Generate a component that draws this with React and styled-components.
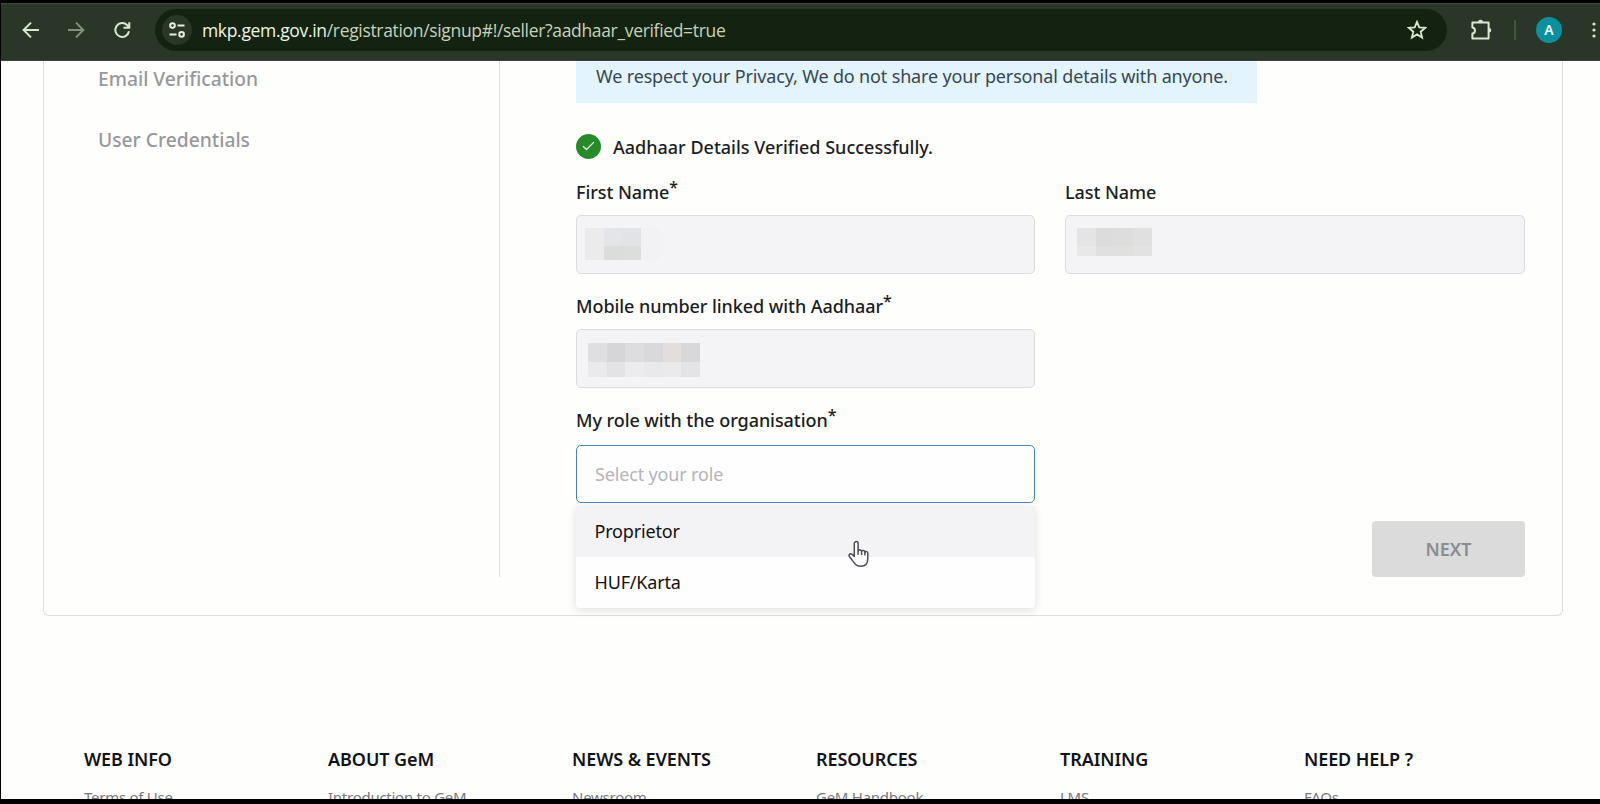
import React from "react";
import styled, { createGlobalStyle } from "styled-components";

const GlobalStyle = createGlobalStyle`
  * {
    box-sizing: border-box;
  }
  body {
    margin: 0;
    background: #000;
    font-family: "Noto Sans", "Open Sans", sans-serif;
  }
`;

const Screen = styled.div`
  width: 1600px;
  height: 804px;
  padding: 3px 0 5px 1px;
  background: #000;
  display: flex;
  flex-direction: column;
  overflow: hidden;
`;

const Toolbar = styled.header`
  height: 58px;
  flex: none;
  display: flex;
  align-items: center;
  padding-left: 20px;
  padding-bottom: 4px;
  background: #2a3728;
  border-top: 1px solid #3c4a3a;
  border-bottom: 1px solid #3c4439;
  color: #d9e8cf;
  overflow: hidden;
`;

const NavButton = styled.span`
  width: 20px;
  height: 20px;
  margin-right: ${(props) => props.gap || "25px"};
  flex: none;
  opacity: ${(props) => (props.dim ? 0.5 : 1)};
  svg {
    display: block;
  }
`;

const AddressBar = styled.div`
  width: 1292px;
  height: 42px;
  flex: none;
  display: flex;
  align-items: center;
  padding: 0 20px 0 7px;
  border-radius: 21px;
  background: #142211;
`;

const SiteInfo = styled.span`
  width: 30px;
  height: 30px;
  display: flex;
  align-items: center;
  justify-content: center;
  border-radius: 50%;
  background: #2a3728;
`;

const Url = styled.div`
  flex: 1;
  margin-left: 10px;
  font-family: "Open Sans", "Noto Sans", sans-serif;
  font-size: 17.5px;
  line-height: 24px;
  letter-spacing: -0.33px;
  white-space: nowrap;
  color: #c6d3bb;
  b {
    font-weight: 400;
    color: #eef5e6;
  }
`;

const ToolbarEnd = styled.div`
  display: flex;
  align-items: center;
  flex: none;
  margin-left: 23px;
`;

const Separator = styled.span`
  width: 2px;
  height: 20px;
  margin: 0 20px 0 22px;
  background: #44533f;
`;

const Avatar = styled.span`
  width: 26px;
  height: 26px;
  margin-right: 30px;
  border-radius: 50%;
  background: #0b919d;
  color: #e6fbfb;
  font-size: 14px;
  font-weight: 600;
  line-height: 26px;
  text-align: center;
`;

const Page = styled.main`
  flex: 1;
  min-height: 0;
  overflow: hidden;
  background: #fefefd;
`;

const Card = styled.section`
  width: 1520px;
  height: 555px;
  margin-left: 42px;
  display: flex;
  border: 1px solid #dedede;
  border-top: 0;
  border-radius: 0 0 6px 6px;
`;

const Steps = styled.nav`
  width: 456px;
  height: 516px;
  flex: none;
  padding: 2px 0 0 54px;
  border-right: 1px solid #dedfe1;
`;

const Step = styled.div`
  height: 31px;
  margin-bottom: 30px;
  font-size: 19.25px;
  font-weight: 500;
  line-height: 31px;
  color: #97989c;
`;

const Form = styled.form`
  flex: 1;
  padding-left: 76px;
`;

const Notice = styled.p`
  width: 681px;
  height: 42px;
  margin: 0;
  padding-left: 20px;
  font-size: 18px;
  line-height: 31px;
  letter-spacing: -0.16px;
  white-space: nowrap;
  color: #37474f;
  background: #e3f4ff;
`;

const Verified = styled.div`
  display: flex;
  align-items: center;
  gap: 12px;
  height: 26px;
  margin-top: 30px;
  font-size: 18px;
  font-weight: 500;
  line-height: 24px;
  color: #1a1d23;
  b {
    padding-top: 2px;
    font-weight: inherit;
  }
`;

const CheckBadge = styled.span`
  width: 25px;
  height: 25px;
  display: flex;
  align-items: center;
  justify-content: center;
  border-radius: 50%;
  background: #268a2b;
`;

const Fields = styled.div`
  display: grid;
  grid-template-columns: 459px 460px;
  column-gap: 30px;
  margin-top: 19px;
`;

const Field = styled.div`
  position: relative;
  height: ${(props) => props.height || "114px"};
`;

const Label = styled.label`
  display: block;
  height: ${(props) => props.height || "37px"};
  font-size: 18px;
  font-weight: 500;
  letter-spacing: -0.06px;
  line-height: 28px;
  color: #1a1d23;
  sup {
    position: relative;
    top: -6px;
    font-size: 16px;
    line-height: 0;
    vertical-align: baseline;
  }
`;

const Input = styled.div`
  height: ${(props) => (props.active ? "58px" : "59px")};
  display: flex;
  align-items: flex-start;
  padding: ${(props) => props.pad || "0 18px"};
  border: 1px solid ${(props) => (props.active ? "#4a86bb" : "#dcdcde")};
  border-radius: 5px;
  background: ${(props) => (props.active ? "#fefefe" : "#f4f4f7")};
  font-size: 18px;
  letter-spacing: -0.16px;
  line-height: 56px;
  color: #b3b4b6;
`;

const Mosaic = styled.div`
  display: grid;
  grid-template-columns: repeat(${(props) => props.cols}, 18.7px);
  grid-template-rows: ${(props) => props.rows};
`;

const Tile = styled.i`
  background: ${(props) => props.tone};
`;

const Options = styled.ul`
  position: absolute;
  top: 100px;
  left: 0;
  width: 459px;
  margin: 0;
  padding: 0;
  list-style: none;
  background: #fefefe;
  border-radius: 4px;
  box-shadow: 0 2px 10px rgba(0, 0, 0, 0.13);
`;

const Option = styled.li`
  height: 51px;
  padding-left: 18.5px;
  font-size: 18px;
  letter-spacing: -0.18px;
  line-height: 51px;
  color: #101114;
  background: ${(props) => (props.hovered ? "#f3f3f6" : "transparent")};
`;

const Pointer = styled.svg`
  position: absolute;
  top: 133px;
  left: 270px;
`;

const Actions = styled.div`
  display: flex;
  align-items: flex-end;
  justify-content: flex-end;
`;

const NextButton = styled.button`
  width: 153px;
  height: 56px;
  border: 0;
  border-radius: 4px;
  background: #dbdbdb;
  color: #8a8c90;
  font-family: inherit;
  font-size: 18px;
  font-weight: 600;
`;

const Footer = styled.footer`
  display: grid;
  grid-template-columns: repeat(6, 244px);
  padding: 129px 0 0 83px;
`;

const FooterTitle = styled.h4`
  margin: 0 0 12px;
  font-size: 18px;
  font-weight: 600;
  letter-spacing: -0.08px;
  line-height: 28px;
  color: #111318;
`;

const FooterLink = styled.a`
  display: block;
  font-size: 15px;
  letter-spacing: -0.26px;
  line-height: 24px;
  color: #77797d;
`;

const firstName = ["#ebebec", "#e4e5e8", "#e1e3e6", "#f2f2f5", "#ebebec", "#dcdcda", "#dddddc", "#f2f2f5"];
const lastName = ["#e4e4e5", "#dcdcdc", "#dddddd", "#e0e0e1", "#e8e8e9", "#e0e0e0", "#e0e0df", "#e2e2e3"];
const mobile = [
  "#dfdfe0", "#d6d6d9", "#dddddd", "#d9d9dc", "#e1dedb", "#d8d8db",
  "#eaeaec", "#e3e3e6", "#ecebee", "#e9e9ea", "#eaeaec", "#e4e4e4",
];

const footerColumns = [
  ["WEB INFO", "Terms of Use"],
  ["ABOUT GeM", "Introduction to GeM"],
  ["NEWS & EVENTS", "Newsroom"],
  ["RESOURCES", "GeM Handbook"],
  ["TRAINING", "LMS"],
  ["NEED HELP ?", "FAQs"],
];

const Stroke = ({ d, size = 20, width = 2 }) => (
  <svg width={size} height={size} viewBox="0 0 20 20" fill="none" stroke="currentColor" strokeWidth={width}>
    <path d={d} />
  </svg>
);

const Redacted = ({ tones, cols, rows }) => (
  <Mosaic cols={cols} rows={rows}>
    {tones.map((tone, i) => (
      <Tile key={i} tone={tone} />
    ))}
  </Mosaic>
);

const BrowserBar = () => (
  <Toolbar>
    <NavButton>
      <Stroke d="M18 10H3M10 2.6 2.6 10l7.4 7.4" />
    </NavButton>
    <NavButton dim>
      <Stroke d="M2 10h15M10 2.6l7.4 7.4-7.4 7.4" />
    </NavButton>
    <NavButton gap="24px">
      <Stroke d="M18 11.2A6.9 6.9 0 1 1 16.2 5.2L18 7.4M18.3 2.2v5.6h-5.8" />
    </NavButton>
    <AddressBar>
      <SiteInfo>
        <svg width="18" height="18" viewBox="0 0 18 18" fill="none" stroke="#e6f0de" strokeWidth="2">
          <circle cx="4.5" cy="4.6" r="2.3" />
          <path d="M9.5 4.6h7M1.5 13.4h7" />
          <circle cx="13.6" cy="13.4" r="2.3" />
        </svg>
      </SiteInfo>
      <Url>
        <b>mkp.gem.gov.in</b>/registration/signup#!/seller?aadhaar_verified=true
      </Url>
      <Stroke d="M10 1.8l2.3 5.5 6 .5-4.6 3.9 1.4 5.8L10 14.4l-5.1 3.1 1.4-5.8L1.7 7.8l6-.5z" width={1.8} />
    </AddressBar>
    <ToolbarEnd>
      <svg width="22" height="22" viewBox="0 0 22 22" fill="none" stroke="currentColor" strokeWidth="2">
        <path d="M2.4 3.6H18.6v15.8H2.4v-4.800c3.400-.4 3.400-5.800 0-6.200z" strokeLinejoin="round" />
        <path d="M8 3.200a2.500 2.500 0 0 1 5 0zM19 9a2.300 2.300 0 0 1 0 4.600z" fill="currentColor" stroke="none" />
      </svg>
      <Separator />
      <Avatar>A</Avatar>
      <svg width="4" height="18" viewBox="0 0 4 18" fill="currentColor">
        <circle cx="2" cy="3" r="1.6" />
        <circle cx="2" cy="9" r="1.6" />
        <circle cx="2" cy="15" r="1.6" />
      </svg>
    </ToolbarEnd>
  </Toolbar>
);

const RoleSelect = () => (
  <Field height="171px">
    <Label height="39px">
      My role with the organisation<sup>*</sup>
    </Label>
    <Input active>Select your role</Input>
    <Options>
      <Option hovered>Proprietor</Option>
      <Option>HUF/Karta</Option>
    </Options>
    <Pointer width="26" height="30" viewBox="0 0 26 30" fill="#fff" stroke="#4b4c58" strokeWidth="1.5" strokeLinejoin="round">
      <path d="M8.3 17.5V4.5a1.9 1.9 0 0 1 3.8 0v7.3c.4-1.3 3.3-1.3 3.5.5.5-1.2 3.2-1 3.3.8.7-1 2.9-.7 2.9 1.2v5.2c0 5-2.5 7.8-6.8 7.8-3.7 0-5.7-1.6-7.3-4.2l-4.3-5.6c-1.3-1.8.9-3.6 2.6-2.2z" />
      <path d="M12.1 11.8v4M15.6 12.3v3.8M18.9 13.1v3.3" />
    </Pointer>
  </Field>
);

export default function App() {
  return (
    <Screen>
      <GlobalStyle />
      <BrowserBar />
      <Page>
        <Card>
          <Steps>
            <Step>Email Verification</Step>
            <Step>User Credentials</Step>
          </Steps>
          <Form>
            <Notice>We respect your Privacy, We do not share your personal details with anyone.</Notice>
            <Verified>
              <CheckBadge>
                <svg width="13" height="10" viewBox="0 0 13 10" fill="none" stroke="#d9f2da" strokeWidth="1.3">
                  <path d="M1 5.2 4.5 8.5 12 1" />
                </svg>
              </CheckBadge>
              <b>Aadhaar Details Verified Successfully.</b>
            </Verified>
            <Fields>
              <Field>
                <Label>
                  First Name<sup>*</sup>
                </Label>
                <Input pad="12px 8px">
                  <Redacted tones={firstName} cols={4} rows="18px 14px" />
                </Input>
              </Field>
              <Field>
                <Label>Last Name</Label>
                <Input pad="12px 11px">
                  <Redacted tones={lastName} cols={4} rows="18px 10px" />
                </Input>
              </Field>
              <Field>
                <Label>
                  Mobile number linked with Aadhaar<sup>*</sup>
                </Label>
                <Input pad="13px 11px">
                  <Redacted tones={mobile} cols={6} rows="19px 15px" />
                </Input>
              </Field>
              <Field />
              <RoleSelect />
              <Actions>
                <NextButton type="button">NEXT</NextButton>
              </Actions>
            </Fields>
          </Form>
        </Card>
        <Footer>
          {footerColumns.map(([title, link]) => (
            <div key={title}>
              <FooterTitle>{title}</FooterTitle>
              <FooterLink>{link}</FooterLink>
            </div>
          ))}
        </Footer>
      </Page>
    </Screen>
  );
}
